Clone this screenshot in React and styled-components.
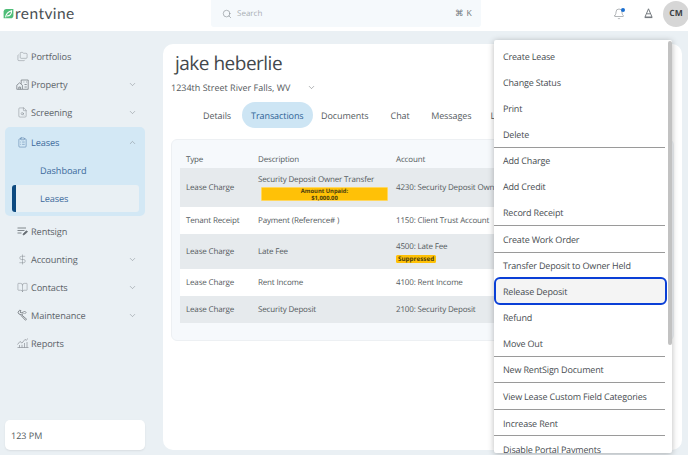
import React from "react";
import styled, { createGlobalStyle } from "styled-components";
import { Search, Bell, ChevronDown, ChevronUp, Folders, FileSearch, ClipboardList, DollarSign, BookOpen } from "lucide-react";

const Global = createGlobalStyle`
  html, body { margin: 0; padding: 0; height: 100%; overflow: hidden; }
  body { font-family: "Open Sans", "Liberation Sans", sans-serif; background: #eaf0f4; color: #4a4f55; text-rendering: geometricPrecision; }
  * { box-sizing: border-box; }
`;

const Page = styled.div`
  position: relative;
  width: 688px;
  height: 455px;
  overflow: hidden;
  display: flex;
  flex-direction: column;
`;

const Header = styled.header`
  height: 31px;
  flex: none;
  background: #fff;
  display: flex;
  align-items: flex-start;
  position: relative;
`;
const LogoWrap = styled.div`
  width: 211px;
  height: 27px;
  display: flex;
  align-items: center;
  padding-left: 3px;
  gap: 1px;
`;
const LogoText = styled.span`
  font-family: "Lato", sans-serif;
  font-size: 15.5px;
  font-weight: 400;
  letter-spacing: 0.45px;
  color: #4a5054;
`;
const SearchBox = styled.div`
  width: 270px;
  height: 27px;
  background: #f5f9fc;
  border-radius: 0 0 3px 3px;
  display: flex;
  align-items: center;
  padding: 0 9px 0 11px;
  color: #a9afb4;
  font-size: 8px;
  gap: 5px;
`;
const SearchIcon = styled(Search)`
  color: #777e84;
`;
const SearchLabel = styled.span`
  flex: 1;
`;
const Shortcut = styled.span`
  font-size: 8.5px;
  color: #6e7478;
  letter-spacing: 0.4px;
`;
const HeaderRight = styled.div`
  flex: 1;
  height: 27px;
  display: flex;
  align-items: center;
  justify-content: flex-end;
`;
const BellWrap = styled.div`
  position: relative;
  display: flex;
  margin-right: 19px;
  color: #666c72;
`;
const BellDot = styled.span`
  position: absolute;
  top: 0;
  right: 0;
  width: 4px;
  height: 4px;
  border-radius: 50%;
  background: #1a6fd1;
`;
const Beacon = styled.svg`
  margin-right: 10px;
  color: #666c72;
`;
const Avatar = styled.div`
  width: 26px;
  height: 26px;
  margin-right: -1px;
  border-radius: 50%;
  background: #d6d6d6;
  color: #3d4245;
  font-size: 8.5px;
  font-weight: 700;
  display: flex;
  align-items: center;
  justify-content: center;
  flex: none;
`;

const Body = styled.div`
  flex: 1;
  display: flex;
  min-height: 0;
`;
const Sidebar = styled.nav`
  width: 163px;
  flex: none;
  padding: 11px 18px 5px 5px;
  display: flex;
  flex-direction: column;
`;
const Item = styled.div`
  height: 28px;
  display: flex;
  align-items: center;
  padding: 0 8px 0 9px;
  font-size: 9.2px;
  letter-spacing: -0.1px;
  color: ${p => (p.$blue ? "#3d6a9c" : "#5c6369")};
`;
const IconSlot = styled.span`
  width: 17px;
  flex: none;
  display: flex;
  justify-content: center;
`;
const ItemLabel = styled.span`
  flex: 1;
`;
const Chevron = styled.span`
  display: flex;
  color: #7b8288;
`;
const Group = styled.div`
  margin: 1px 0 1px;
  background: #d3e8f5;
  border-radius: 5px;
  padding: 1px 0 4px;
  display: flex;
  flex-direction: column;
`;
const SubItem = styled.div`
  height: 27px;
  margin-left: 7px;
  margin-right: 6px;
  padding-left: 24px;
  display: flex;
  align-items: center;
  font-size: 9.2px;
  letter-spacing: -0.1px;
  color: #3d6a9c;
  border-radius: 3px;
  background: ${p => (p.$active ? "#e9f0f4" : "transparent")};
  border-left: ${p => (p.$active ? "4px solid #0d4a80" : "4px solid transparent")};
  margin-top: 1px;
`;
const Spacer = styled.div`
  flex: 1;
`;
const UserCard = styled.div`
  height: 30px;
  background: #fff;
  border-radius: 5px;
  box-shadow: 0 1px 2px rgba(0, 0, 0, 0.08);
  display: flex;
  align-items: center;
  padding-left: 6px;
  font-size: 9px;
  color: #53595e;
`;

const Main = styled.main`
  flex: 1;
  min-width: 0;
  padding: 13px 6px 5px 0;
  display: flex;
`;
const Card = styled.section`
  flex: 1;
  background: #fff;
  border-radius: 10px;
  overflow: hidden;
  padding: 7px 8px 0;
  display: flex;
  flex-direction: column;
`;
const Title = styled.h1`
  margin: 0 0 0 4px;
  font-size: 19px;
  line-height: 24px;
  font-weight: 400;
  letter-spacing: -0.5px;
  color: #43484c;
`;
const Address = styled.div`
  margin-top: 4px;
  height: 16px;
  display: flex;
  align-items: center;
  gap: 17px;
  font-size: 9px;
  color: #55595d;
  white-space: nowrap;
`;
const Tabs = styled.div`
  margin-top: 7px;
  height: 26px;
  display: flex;
  align-items: center;
  padding-left: 32px;
  white-space: nowrap;
  font-size: 9px;
  letter-spacing: -0.08px;
`;
const Tab = styled.div`
  height: 26px;
  padding: 0 ${p => p.$pad}px;
  margin-left: ${p => p.$gap || 0}px;
  display: flex;
  align-items: center;
  border-radius: 13px;
  color: ${p => (p.$active ? "#2f6496" : "#555b60")};
  background: ${p => (p.$active ? "#cde5f4" : "transparent")};
`;
const TableCard = styled.div`
  margin-top: 11px;
  height: 202px;
  background: #f6f9fc;
  border: 1px solid #edf0f3;
  border-radius: 6px;
  padding: 10px 8px 0;
`;
const Row = styled.div`
  display: grid;
  grid-template-columns: 72px 138px 1fr;
  align-items: center;
  height: ${p => p.$h}px;
  padding: 0.6px 0 0 6px;
  background: ${p => (p.$tone === "grey" ? "#e6eaed" : p.$tone === "white" ? "#fff" : "transparent")};
  font-size: 8px;
  letter-spacing: -0.16px;
  color: #555b60;
  white-space: nowrap;
`;
const Cell = styled.div`
  min-width: 0;
  display: flex;
  flex-direction: column;
`;
const AmountBadge = styled.div`
  width: 127px;
  height: 14px;
  margin: 2px 0 0 3px;
  background: #ffc107;
  border: 0.5px solid #ffd75e;
  border-radius: 1px;
  color: #4a3d10;
  font-size: 5.8px;
  line-height: 6.3px;
  font-weight: 700;
  text-align: center;
  letter-spacing: 0;
`;
const SuppressedBadge = styled.span`
  align-self: flex-start;
  margin-top: 3px;
  background: #ffc107;
  border-radius: 1.5px;
  padding: 0 2px;
  height: 8px;
  line-height: 8px;
  font-size: 6.3px;
  font-weight: 700;
  letter-spacing: 0;
  color: #4a3d10;
`;

const Menu = styled.div`
  position: absolute;
  top: 40px;
  left: 494px;
  width: 178px;
  height: 413px;
  background: #fff;
  border-radius: 2px;
  box-shadow: 0 1px 6px rgba(0, 0, 0, 0.28);
  overflow: hidden;
  padding-top: 3.4px;
`;
const MenuItem = styled.div`
  width: ${p => (p.$focus ? "173px" : "171px")};
  height: ${p => (p.$focus ? "28px" : "25.85px")};
  margin: ${p => (p.$focus ? "-1px 0 -1px" : "0")};
  display: flex;
  align-items: center;
  padding: 1px 0 0 ${p => (p.$focus ? "7px" : "9px")};
  font-size: 9px;
  letter-spacing: -0.18px;
  color: #484d51;
  white-space: nowrap;
  background: ${p => (p.$focus ? "#f4f4f4" : "transparent")};
  border: ${p => (p.$focus ? "2px solid #0a3fd6" : "none")};
  border-radius: ${p => (p.$focus ? "6px" : "0")};
`;
const Divider = styled.div`
  width: 171px;
  height: 1px;
  margin-bottom: -0.3px;
  background: #9a9a9a;
`;
const ScrollThumb = styled.div`
  position: absolute;
  top: 1px;
  right: 0;
  width: 4px;
  height: 304px;
  border-radius: 2px;
  background: #c2c2c2;
`;

const ic = { size: 11, strokeWidth: 1 };

const HouseIcon = () => (
  <svg width="13" height="11" viewBox="0 0 13 11" fill="none" stroke="#7a8086" strokeWidth="0.8">
    <path d="M0.8 10.3V6.2L3.6 3.8l2.8 2.4v4.1zM2.8 10.3V8h1.6v2.3" />
    <path d="M5.2 4.8V1h7v9.3H6.4M7.5 3h0.8M10 3h0.8M8.5 5.5h2.3M8.5 8h2.3" />
  </svg>
);
const SignIcon = () => (
  <svg width="11" height="9" viewBox="0 0 11 9" fill="none" stroke="#666c72" strokeWidth="0.8">
    <path d="M0.5 1h8.5M0.5 3.5h7M0.5 6h4" />
    <path d="M6 8l0.5-1.5L9.5 3.8l1 1L7.5 7.5z" fill="#666c72" />
  </svg>
);
const WrenchIcon = () => (
  <svg width="11" height="12" viewBox="0 0 11 12" fill="none" stroke="#7a8086" strokeWidth="0.9">
    <path d="M1 3.2 2.6 1.2 4 1.6 3 3 4 4 5.6 3.2 6 4.6 4.8 6 1.9 5z" />
    <path d="M4.8 6 9.6 10.2 8.4 11.2 3.9 6.4" />
    <path d="M6 3.5 7.5 2 9 3.5 7.5 5" />
  </svg>
);
const ChartIcon = () => (
  <svg width="12" height="10" viewBox="0 0 12 10" fill="none" stroke="#7a8086" strokeWidth="0.6">
    <path d="M0.5 6.5 3 3.5l2 1.6L8 1.4l1.2 0.9 1.8-1.8" />
    <path d="M0.5 9.5h11M2.5 9.5V7M5 9.5V6.8M7.5 9.5V5M10 9.5V4" />
  </svg>
);

const Down = () => <Chevron><ChevronDown size={9} strokeWidth={1.3} /></Chevron>;

const rows = [
  { h: 39, tone: "grey", type: "Lease Charge", desc: "Security Deposit Owner Transfer", account: "4230: Security Deposit Owner Held", amount: true },
  { h: 27, tone: "white", type: "Tenant Receipt", desc: "Payment (Reference# )", account: "1150: Client Trust Account" },
  { h: 35, tone: "grey", type: "Lease Charge", desc: "Late Fee", account: "4500: Late Fee", suppressed: true },
  { h: 27, tone: "white", type: "Lease Charge", desc: "Rent Income", account: "4100: Rent Income" },
  { h: 27, tone: "grey", type: "Lease Charge", desc: "Security Deposit", account: "2100: Security Deposit" },
];

const menu = [
  ["Create Lease", "Change Status", "Print", "Delete"],
  ["Add Charge", "Add Credit", "Record Receipt"],
  ["Create Work Order"],
  ["Transfer Deposit to Owner Held", "Release Deposit", "Refund", "Move Out"],
  ["New RentSign Document"],
  ["View Lease Custom Field Categories"],
  ["Increase Rent"],
  ["Disable Portal Payments"],
];

export default function App() {
  return (
    <Page>
      <Global />
      <Header>
        <LogoWrap>
          <svg width="11" height="11" viewBox="0 0 11 11">
            <path d="M3 1h7.4v6.4A2.8 2.8 0 0 1 7.6 10.2H0.6V3.4A2.6 2.6 0 0 1 3 1z" fill="#4fbd78" />
            <path d="M2.6 9.4C3 6 5 3.8 8.6 2.8 8.6 6 7 8 4 8" fill="none" stroke="#fff" strokeWidth="1.1" />
          </svg>
          <LogoText>rentvine</LogoText>
        </LogoWrap>
        <SearchBox>
          <SearchIcon size={10} strokeWidth={1.3} />
          <SearchLabel>Search</SearchLabel>
          <Shortcut>⌘ K</Shortcut>
        </SearchBox>
        <HeaderRight>
          <BellWrap>
            <Bell size={12} strokeWidth={1} />
            <BellDot />
          </BellWrap>
          <Beacon width="9" height="11" viewBox="0 0 9 11" fill="none" stroke="currentColor" strokeWidth="0.9">
            <path d="M4.5 0.8 1 9h7zM3 5.8h3M0.6 9.6h7.8" />
          </Beacon>
          <Avatar>CM</Avatar>
        </HeaderRight>
      </Header>
      <Body>
        <Sidebar>
          <Item><IconSlot><Folders {...ic} color="#7a8086" /></IconSlot><ItemLabel>Portfolios</ItemLabel></Item>
          <Item><IconSlot><HouseIcon /></IconSlot><ItemLabel>Property</ItemLabel><Down /></Item>
          <Item><IconSlot><FileSearch {...ic} color="#7a8086" /></IconSlot><ItemLabel>Screening</ItemLabel><Down /></Item>
          <Group>
            <Item $blue><IconSlot><ClipboardList {...ic} color="#3d6a9c" /></IconSlot><ItemLabel>Leases</ItemLabel><Chevron><ChevronUp size={9} strokeWidth={1.3} /></Chevron></Item>
            <SubItem>Dashboard</SubItem>
            <SubItem $active>Leases</SubItem>
          </Group>
          <Item><IconSlot><SignIcon /></IconSlot><ItemLabel>Rentsign</ItemLabel></Item>
          <Item><IconSlot><DollarSign {...ic} color="#7a8086" /></IconSlot><ItemLabel>Accounting</ItemLabel><Down /></Item>
          <Item><IconSlot><BookOpen {...ic} color="#7a8086" /></IconSlot><ItemLabel>Contacts</ItemLabel><Down /></Item>
          <Item><IconSlot><WrenchIcon /></IconSlot><ItemLabel>Maintenance</ItemLabel><Down /></Item>
          <Item><IconSlot><ChartIcon /></IconSlot><ItemLabel>Reports</ItemLabel></Item>
          <Spacer />
          <UserCard>123 PM</UserCard>
        </Sidebar>
        <Main>
          <Card>
            <Title>jake heberlie</Title>
            <Address>
              1234th Street River Falls, WV
              <ChevronDown size={9} strokeWidth={1.2} />
            </Address>
            <Tabs>
              <Tab $pad={0}>Details</Tab>
              <Tab $pad={9} $gap={11} $active>Transactions</Tab>
              <Tab $pad={8.5}>Documents</Tab>
              <Tab $pad={13.5}>Chat</Tab>
              <Tab $pad={8}>Messages</Tab>
              <Tab $pad={11}>Ledger</Tab>
            </Tabs>
            <TableCard>
              <Row $h={18}>
                <Cell>Type</Cell>
                <Cell>Description</Cell>
                <Cell>Account</Cell>
              </Row>
              {rows.map((r, i) => (
                <Row key={i} $h={r.h} $tone={r.tone}>
                  <Cell>{r.type}</Cell>
                  <Cell>
                    {r.desc}
                    {r.amount && <AmountBadge>Amount Unpaid:<br />$1,000.00</AmountBadge>}
                  </Cell>
                  <Cell>
                    {r.account}
                    {r.suppressed && <SuppressedBadge>Suppressed</SuppressedBadge>}
                  </Cell>
                </Row>
              ))}
            </TableCard>
          </Card>
        </Main>
      </Body>
      <Menu>
        {menu.map((section, i) => (
          <React.Fragment key={i}>
            {i > 0 && <Divider />}
            {section.map(label => (
              <MenuItem key={label} $focus={label === "Release Deposit"}>{label}</MenuItem>
            ))}
          </React.Fragment>
        ))}
        <ScrollThumb />
      </Menu>
    </Page>
  );
}
